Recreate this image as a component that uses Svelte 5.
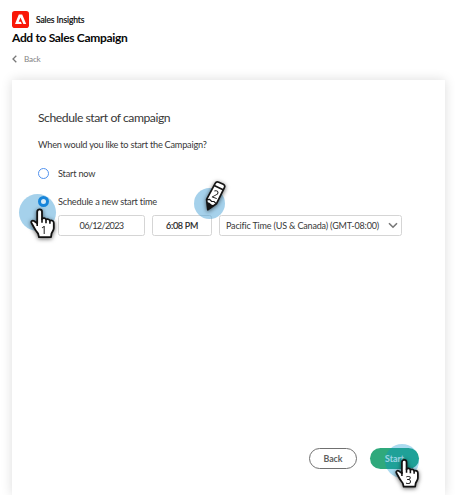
<script>
  const zone = 'Pacific Time (US & Canada) (GMT-08:00)';
</script>

{#snippet hand(n)}
  <svg class="hand" viewBox="0 0 26 31" width="26" height="31">
    <path d="M7.2 3.7C7.2 .5 12 .5 12 3.7V11c1.2-1.3 3.6-1 4 .6 1.3-.9 3.4-.4 3.8 1.1 2-.7 4 .2 4 2.2v5.4c0 2.2-1.8 3.7-2.3 5.3l-.5 3.6H9l-.8-3.3c-.6-1.7-2-2.3-2.9-4.2L1.5 15c-.8-1.6.9-3 2.5-2l3.2 2.2Z" fill="#fff" stroke="#111" stroke-width="1.8" stroke-linejoin="round" />
    <path d="M7.2 14v4M12 10.5v4.3M16 11.7v3.6M19.9 12.8v3" stroke="#111" stroke-width="1.6" fill="none" />
    <text x="14" y="26.2" text-anchor="middle">{n}</text>
  </svg>
{/snippet}

<div class="page">
  <header>
    <div class="brand">
      <svg width="17" height="17" viewBox="0 0 17 17">
        <rect width="17" height="17" rx="2.8" fill="#f91808" />
        <path d="M6.8 3.6h3.4l4 9.4h-2.8L8.5 6.6l-1.8 4.2h2.2l.9 2.2H3z" fill="#fff" />
      </svg>
      <span class="product">Sales Insights</span>
    </div>
    <h1><span>Add to Sales Campaign</span></h1>
    <div class="crumb">
      <svg width="5" height="8" viewBox="0 0 5 8"><path d="M4.3.7 1 4l3.3 3.3" fill="none" stroke="#777" stroke-width="1.3" /></svg>
      <span>Back</span>
    </div>
  </header>

  <main>
    <h2><span>Schedule start of campaign</span></h2>
    <p><span>When would you like to start the Campaign?</span></p>
    <div class="option">
      <i class="radio"></i><span class="now">Start now</span>
    </div>
    <div class="option second">
      <i class="radio on"></i><span class="later">Schedule a new start time</span>
      <div class="mark one"><b class="halo"></b>{@render hand(1)}</div>
    </div>
    <div class="fields">
      <div class="field date"><span>06/12/2023</span></div>
      <div class="field time">
        <span>6:08 PM</span>
        <div class="mark two">
          <b class="halo"></b>
          <svg class="pencil" width="24" height="34" viewBox="0 0 24 34">
            <path d="M2.6 20.4 11.2 4.4q1.2-2.2 3.5-1.2l4.6 2q2.2 1.2 1.1 3.4l-8 16.2-8.6 6Z" fill="#fff" stroke="#151515" stroke-width="1.7" stroke-linejoin="round" />
            <path d="m2.8 23 2.6.8 2 1.8 2.6.8-6.2 4.4Z" fill="#151515" />
            <path d="m2.8 20.6 2.8-.2 2 2.1 2.4 0 2.2 2.2" fill="none" stroke="#151515" stroke-width="1.2" />
            <path d="m10.2 6.4 8.9 4.4" stroke="#151515" stroke-width="1.7" />
            <text x="11.4" y="19.2" text-anchor="middle" transform="rotate(20 11.4 16)">2</text>
          </svg>
        </div>
      </div>
      <div class="field zone">
        <span>{zone}</span>
        <svg width="10" height="7" viewBox="0 0 10 7"><path d="m1 1.2 4 4 4-4" fill="none" stroke="#777" stroke-width="1.6" /></svg>
      </div>
    </div>
    <footer>
      <button class="back"><span>Back</span></button>
      <button class="start"><span>Start</span>
        <div class="mark three"><b class="halo"></b>{@render hand(3)}</div>
      </button>
    </footer>
  </main>
</div>

<style>
  :global(body) { background: #fff; overflow: hidden; }
  .page {
    box-sizing: border-box;
    width: 455px;
    height: 495px;
    padding: 11px 10px 0 12px;
    overflow: hidden;
    display: flex;
    flex-direction: column;
    font-family: Lato, "Noto Sans", sans-serif;
    color: #383838;
  }
  span { white-space: nowrap; }
  header { height: 69px; flex: none; color: #080808; }
  .brand { display: flex; align-items: center; gap: 7px; height: 17px; }
  .product { font-size: 8.5px; letter-spacing: -0.1px; -webkit-text-stroke: 0.2px; }
  h1 { margin: 1px 0 0; font-size: 12px; line-height: 17px; font-weight: 700; letter-spacing: -0.33px; }
  .crumb { display: flex; align-items: center; gap: 7px; margin-top: 5px; height: 16px; font-size: 8.2px; letter-spacing: -0.2px; color: #858585; }
  main {
    flex: 1;
    box-sizing: border-box;
    padding: 28px 4px 0 26px;
    background: #fff;
    box-shadow: 0 0 11px rgba(0, 0, 0, 0.14);
    display: flex;
    flex-direction: column;
  }
  h2 { margin: 0; font-size: 12.2px; line-height: 19px; font-weight: 400; letter-spacing: -0.46px; }
  p { margin: 10px 0 0; font-size: 9.2px; line-height: 16px; letter-spacing: -0.23px; }
  .option { position: relative; display: flex; align-items: center; gap: 9px; height: 16px; margin-top: 12px; font-size: 9.2px; letter-spacing: -0.2px; }
  .second { z-index: 1; }
  .radio { box-sizing: border-box; width: 11px; height: 11px; border: 1px solid #5292ee; border-radius: 50%; background: #fff; }
  .radio.on { position: relative; z-index: 2; border: 3.5px solid #1785da; background: #d6eaf8; }
  .fields { display: flex; gap: 7px; margin: 6px 0 0 20px; }
  .field {
    position: relative;
    box-sizing: border-box;
    height: 21px;
    border: 1px solid #d5d5d5;
    border-radius: 2.5px;
    display: flex;
    align-items: center;
    justify-content: center;
    font-size: 9px;
    letter-spacing: -0.17px;
  }
  .date { width: 87px; letter-spacing: -0.7px; font-size: 9.2px; }
  .time { width: 60px; color: #222; letter-spacing: -0.3px; -webkit-text-stroke: 0.15px; }
  .zone { width: 183px; justify-content: space-between; padding: 0 3px 0 6px; }
  footer { display: flex; gap: 13px; margin: 212px 0 0 271px; }
  button {
    position: relative;
    box-sizing: border-box;
    height: 21px;
    padding: 0;
    border-radius: 11px;
    font: 700 8.8px Lato, "Noto Sans", sans-serif;
    display: flex;
    align-items: center;
    justify-content: center;
  }
  .back { width: 48px; border: 1.5px solid #707070; background: #fff; color: #606060; }
  .start { width: 49px; border: 0; background: #2fa97c; color: #e6f5f0; }
  .mark { position: absolute; -webkit-text-stroke: 0; }
  .halo { position: absolute; left: 0; top: 0; width: 37px; height: 37px; border-radius: 50%; background: rgba(76, 163, 215, 0.5); }
  .one { left: -19px; top: 1px; }
  .two { left: 41px; top: -28px; }
  .two .halo { width: 31px; height: 31px; }
  .three { left: 15px; top: -4px; }
  .three .halo { width: 34px; height: 34px; background: rgba(0, 145, 210, 0.33); }
  .hand, .pencil { position: absolute; filter: drop-shadow(0 1.5px 2px rgba(0, 0, 0, 0.6)); }
  .hand { left: 11px; top: 14px; }
  .three .hand { left: 10px; top: 14px; width: 25px; }
  .pencil { left: 10px; top: -9px; }
  text { font: 11px "Noto Sans", sans-serif; letter-spacing: 0; fill: #111; stroke: none; }
</style>
